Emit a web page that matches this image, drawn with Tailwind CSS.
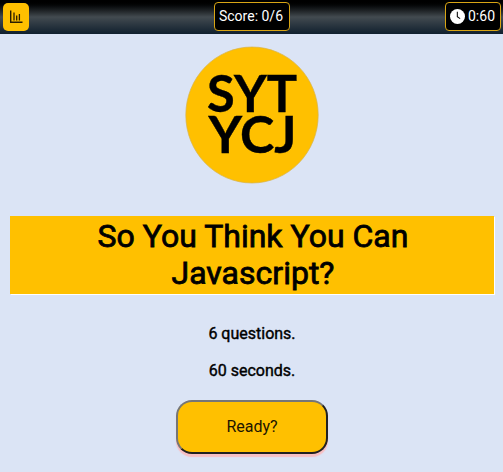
<!DOCTYPE html>
<html lang="en">
<head>
<meta charset="utf-8">
<title>So You Think You Can Javascript?</title>
<script src="https://cdn.jsdelivr.net/npm/@tailwindcss/browser@4"></script>
</head>
<body class="h-[472px] overflow-hidden bg-[#dbe4f5] font-[Roboto,sans-serif] text-black">
<header class="grid h-[34px] grid-cols-[1fr_auto_1fr] items-start bg-linear-to-b from-[#000000] via-[#434b50] via-50% to-[#10202e] px-[3px] pt-[2px]">
  <button class="mt-px flex h-[28px] w-[26px] items-center justify-center rounded-[5px] bg-[#ffc000]" aria-label="Scores">
    <svg class="h-4 w-4" viewBox="0 0 16 16" fill="none" stroke="#2b1d00" stroke-width="1.4"><path d="M2.7 1.5v11.8H14.5" /><path d="M6 3.5v8M8.7 6.5v5M11.4 5v6.5" stroke-width="1.3"/></svg>
  </button>
  <div class="flex h-[29px] w-[76px] items-center justify-center rounded-[4px] border border-[#d9a514] bg-black pr-px text-[14px] whitespace-nowrap text-white">Score: 0/6</div>
  <div class="-mr-px flex h-[29px] w-[56px] items-center justify-center gap-[3px] justify-self-end rounded-[4px] border border-[#d9a514] bg-black pr-px text-[14px] text-white">
    <svg class="-mt-px h-[15px] w-[15px]" viewBox="0 0 16 16"><circle cx="8" cy="8" r="8" fill="#fff"/><path d="M7.8 3v5.3l3 2" fill="none" stroke="#000" stroke-width="1.1"/></svg>
    <span>0:60</span>
  </div>
</header>
<main class="flex flex-col items-center pr-[9px] pl-[10px]">
  <svg class="mt-[12px] mr-px h-[138px] w-[134px]" viewBox="0 0 134 138" font-family="Lato, sans-serif" font-weight="700" font-size="51">
    <ellipse cx="67" cy="69" rx="66.2" ry="68" fill="#ffc000" stroke="#d7b34c" stroke-width=".7"/>
    <g stroke="#000" stroke-width=".4">
      <text x="22" y="65.5" textLength="90" lengthAdjust="spacingAndGlyphs">SYT</text>
      <text x="23.5" y="107" textLength="88" lengthAdjust="spacingAndGlyphs">YCJ</text>
    </g>
  </svg>
  <h1 class="mt-[32px] h-[78px] w-full bg-[#ffc000] pr-[63px] pl-[65px] text-center text-[32px] leading-[37px] font-normal shadow-[1px_1px_0_#fff] [-webkit-text-stroke:0.8px_#000]"><span class="block pt-[2px]">So You Think You Can Javascript?</span></h1>
  <p class="mt-[30px] text-[16px] leading-[19px] [-webkit-text-stroke:0.4px_#000]">6 questions.</p>
  <p class="mt-[18px] text-[16px] leading-[19px] [-webkit-text-stroke:0.4px_#000]">60 seconds.</p>
  <button class="mt-[20px] h-[54px] w-[152px] rounded-[16px] border-2 border-t-[#767676] border-r-[#212121] border-b-[#212121] border-l-[#767676] bg-[#ffc000] text-[16px] text-[#1c1500] shadow-[0_3px_1px_#f7bfc3]">Ready?</button>
</main>
</body>
</html>
